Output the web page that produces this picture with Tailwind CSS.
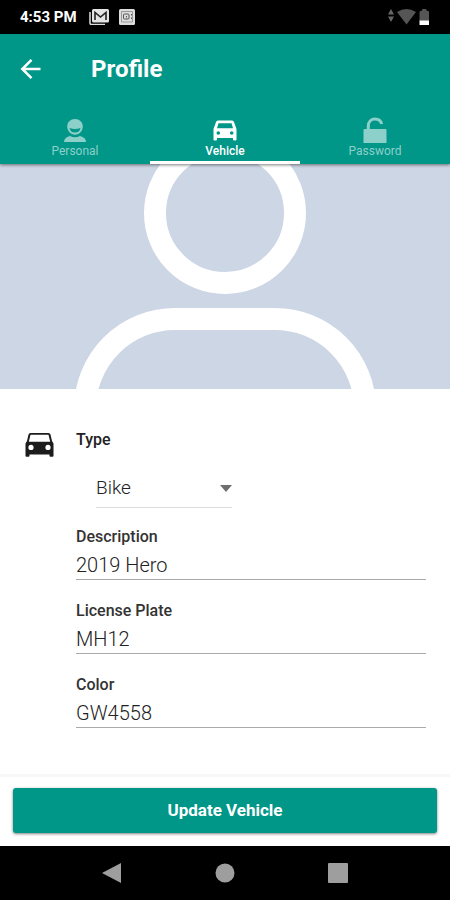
<!DOCTYPE html>
<html lang="en">
<head>
<meta charset="utf-8">
<meta name="viewport" content="width=device-width, initial-scale=1">
<title>Profile</title>
<script src="https://cdn.jsdelivr.net/npm/@tailwindcss/browser@4"></script>
</head>
<body class="flex min-h-screen flex-col bg-white font-['Roboto',sans-serif] text-[#222]">
  <!-- Status bar -->
  <div class="flex h-[34px] items-center bg-black pr-5 pl-5 text-white">
    <span class="w-[69px] text-[15px] leading-5 font-bold whitespace-nowrap">4:53 PM</span>
    <svg class="h-4 w-5" viewBox="0 0 20 16" fill="none" aria-hidden="true">
      <path d="M1 3v11q0 1.500 1.500 1.500H16" stroke="#ddd" stroke-width="1.500"/>
      <rect x="3" y="0" width="17" height="13.500" rx="1.500" fill="#e4e4e4"/>
      <path d="M6 11V3.500l5.500 4.500L17 3.500V11" stroke="#222" stroke-width="1.600"/>
    </svg>
    <svg class="ml-2.5 h-4 w-4" viewBox="0 0 16 16" fill="none" aria-hidden="true">
      <rect x="0" y="0" width="16" height="16" rx="1.500" fill="#ddd"/>
      <path d="M2.500 2.500h11v10.500h-11z" stroke="#999"/>
      <rect x="4.500" y="5" width="5.500" height="5" rx="1" stroke="#555"/>
      <path d="M7.500 7v1.500M12.500 5v1.500M12.500 8.500V10" stroke="#555"/>
    </svg>
    <svg class="ml-auto h-4 w-[42px]" viewBox="0 0 42 16" aria-hidden="true">
      <path d="M3 0l3 5.500H0zM3 13l3-5.500H0z" fill="#666"/>
      <path d="M9 3q9.500-6 19 0l-9.500 12.500z" fill="#555"/>
      <path d="M31.500 3q0-1 1-1h1L34.500 0h3.500l1 2h1q1 0 1 1v9h-9.500z" fill="#555"/>
      <path d="M31.500 11.500h9.500V16h-9.500z" fill="#fff"/>
    </svg>
  </div>

  <!-- App bar and tabs -->
  <header class="relative z-10 bg-[#009688] text-white shadow-[0_1px_3px_rgba(0,0,0,0.5)]">
    <div class="flex h-[70px] items-center px-5">
      <button type="button" aria-label="Back" class="mr-[49px]">
        <svg class="h-[22px] w-[22px]" viewBox="0 0 22 22" fill="none" stroke="#fff" stroke-width="2.500" aria-hidden="true"><path d="M20.500 11H2.500M11.500 1.800L2.300 11l9.200 9.200"/></svg>
      </button>
      <h1 class="text-2xl font-bold">Profile</h1>
    </div>
    <nav class="grid h-[60px] grid-cols-3 text-xs leading-4">
      <a href="#personal" class="flex flex-col items-center border-b-3 border-transparent pt-3 text-[#8dd0c9]">
        <svg class="h-[27px] w-7" viewBox="0 0 28 27" aria-hidden="true">
          <path d="M14 3c4.500 0 7.800 3.300 7.800 7.500S18.500 18.800 14 18.800 6.200 14.700 6.200 10.500 9.500 3 14 3z" fill="currentColor"/>
          <path d="M8.500 12q5.500 2 11 0-1 4.500-5.500 4.500T8.500 12z" fill="#009688"/>
          <path d="M3 26q0-4.500 6-6 5 2.500 10 0 6 1.500 6 6z" fill="currentColor"/>
        </svg>
        Personal
      </a>
      <a href="#vehicle" aria-current="page" class="flex flex-col items-center border-b-3 border-white pt-3 font-medium">
        <svg class="h-[27px] w-7" viewBox="0 0 28 27" aria-hidden="true">
          <path fill-rule="evenodd" d="M7 4.500h14q1.500 0 2 1.500L25.500 13v10.500q0 1-1 1h-1.500q-1 0-1-1V22H6v1.500q0 1-1 1H3.500q-1 0-1-1V13L5 6Q5.500 4.500 7 4.500zM7.500 7.300L6 12.300h16L20.500 7.300zM7.300 15.200a1.800 1.800 0 100 3.600 1.800 1.800 0 000-3.600zm13.400 0a1.800 1.800 0 100 3.600 1.800 1.800 0 000-3.600z" fill="#fff"/>
        </svg>
        Vehicle
      </a>
      <a href="#password" class="flex flex-col items-center border-b-3 border-transparent pt-3 text-[#8dd0c9]">
        <svg class="h-[27px] w-7" viewBox="0 0 28 27" aria-hidden="true">
          <path d="M7.300 14V10c0-4 2.700-7 6.700-7 3.300 0 6 2 6.700 5" fill="none" stroke="currentColor" stroke-width="3"/>
          <rect x="2.500" y="13" width="23" height="15" rx="1" fill="currentColor"/>
        </svg>
        Password
      </a>
    </nav>
  </header>

  <main class="flex-1">
    <svg class="block w-full bg-[#cdd6e5]" viewBox="0 0 450 225" fill="none" stroke="#fff" stroke-width="22" role="img" aria-label="Profile photo placeholder">
      <circle cx="225" cy="49" r="70"/>
      <path d="M85 245a90 90 0 0190-90h100a90 90 0 0190 90"/>
    </svg>

    <form id="vehicle" class="grid grid-cols-[52px_1fr] pt-[41px] pr-6 pb-6 pl-6">
      <svg class="mt-[2px] h-7 w-8" viewBox="0 0 32 28" aria-hidden="true">
        <path fill-rule="evenodd" d="M6.500 1h18q1.500 0 2 1.500L28 9l1.500 2.500V24q0 .8-1 .8h-2q-1 0-1-.8v-1.500h-20V24q0 .8-1 .8h-2q-1 0-1-.8V11.500L3 9l1.500-6.500Q5 1 6.500 1zM6.500 2.800L4.800 9.800h21.400L24.500 2.800zM7 12.800a2.600 2.600 0 100 5.200 2.600 2.600 0 000-5.200zm17 0a2.600 2.600 0 100 5.200 2.600 2.600 0 000-5.200z" fill="#1c1c1c"/>
      </svg>
      <div>
        <label for="type" class="block text-base leading-5 font-medium">Type</label>
        <div class="relative mt-[18px] ml-5 w-[136px]">
          <select id="type" class="h-10 w-full appearance-none border-b border-[#ddd] bg-transparent pt-px text-[19px] font-light">
            <option>Bike</option>
            <option>Car</option>
          </select>
          <svg class="pointer-events-none absolute top-[17px] right-0 h-[7px] w-3" viewBox="0 0 12 7" aria-hidden="true"><path d="M0 0h12L6 7z" fill="#6e6e6e"/></svg>
        </div>
        <div class="mt-[19px] flex flex-col gap-[21px]">
          <div>
            <label for="description" class="block text-base leading-5 font-medium text-[#333]">Description</label>
            <input id="description" value="2019 Hero" class="block h-[33px] w-full border-b border-[#aaa] pt-1 text-xl font-light outline-none">
          </div>
          <div>
            <label for="plate" class="block text-base leading-5 font-medium text-[#333]">License Plate</label>
            <input id="plate" value="MH12" class="block h-[33px] w-full border-b border-[#aaa] pt-1 text-xl font-light outline-none">
          </div>
          <div>
            <label for="color" class="block text-base leading-5 font-medium text-[#333]">Color</label>
            <input id="color" value="GW4558" class="block h-[33px] w-full border-b border-[#aaa] pt-1 text-xl font-light outline-none">
          </div>
        </div>
      </div>
    </form>
  </main>

  <footer>
    <div class="border-t-3 border-[#f7f7f7] px-[13px] pt-[11px] pb-[13px]">
      <button type="submit" form="vehicle" class="h-[45px] w-full rounded-[3px] bg-[#009688] text-[17px] font-bold text-white shadow-[0_1px_3px_rgba(0,0,0,0.5)]">Update Vehicle</button>
    </div>
    <nav class="flex h-[54px] items-center justify-between bg-black px-[102px]" aria-label="System navigation">
      <button type="button" aria-label="Back"><svg class="h-5 w-5" viewBox="0 0 20 20" aria-hidden="true"><path d="M19 0v20L0 10z" fill="#9e9e9e"/></svg></button>
      <button type="button" aria-label="Home"><svg class="h-5 w-5" viewBox="0 0 20 20" aria-hidden="true"><circle cx="10" cy="10" r="9.500" fill="#9e9e9e"/></svg></button>
      <button type="button" aria-label="Recent apps"><svg class="h-5 w-5" viewBox="0 0 20 20" aria-hidden="true"><rect width="20" height="20" rx="1" fill="#9e9e9e"/></svg></button>
    </nav>
  </footer>
</body>
</html>
